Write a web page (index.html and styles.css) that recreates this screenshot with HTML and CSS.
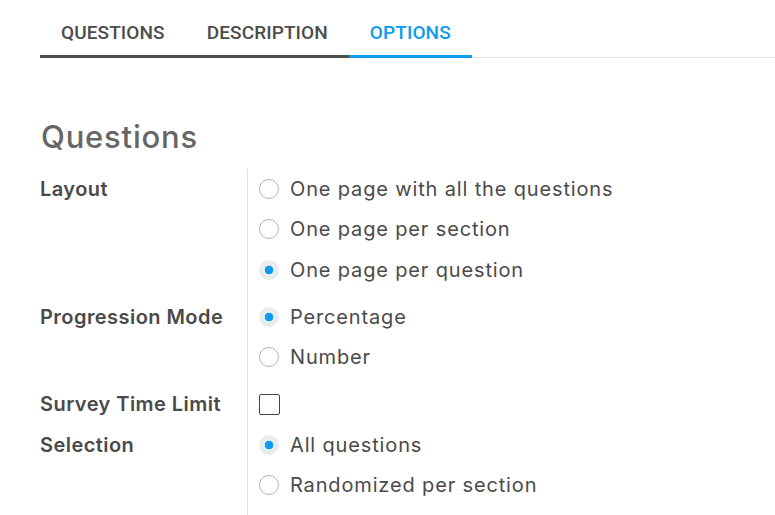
FILE: index.html
```html
<!DOCTYPE html>
<html>
<head>
<meta charset="utf-8">
<link rel="stylesheet" href="styles.css">
</head>
<body>
<nav class="tabs">
  <div class="tab tab-dark">QUESTIONS</div>
  <div class="tab tab-dark">DESCRIPTION</div>
  <div class="tab tab-active">OPTIONS</div>
  <div class="tab-rest"></div>
</nav>
<h2 class="title">Questions</h2>
<div class="form">
  <div class="label">Layout</div>
  <div class="field group">
    <div class="opt"><span class="radio"></span>One page with all the questions</div>
    <div class="opt"><span class="radio"></span>One page per section</div>
    <div class="opt"><span class="radio checked"></span>One page per question</div>
  </div>
  <div class="label">Progression Mode</div>
  <div class="field group">
    <div class="opt"><span class="radio checked"></span>Percentage</div>
    <div class="opt"><span class="radio"></span>Number</div>
  </div>
  <div class="label">Survey Time Limit</div>
  <div class="field">
    <div class="opt"><span class="check"></span></div>
  </div>
  <div class="label">Selection</div>
  <div class="field last">
    <div class="opt"><span class="radio checked"></span>All questions</div>
    <div class="opt"><span class="radio"></span>Randomized per section</div>
  </div>
</div>
</body>
</html>
```
FILE: styles.css
```css
html, body {
  margin: 0;
  padding: 0;
  background: #fff;
}
body {
  font-family: Inter, "Noto Sans", sans-serif;
  color: #4a4a4a;
  width: 775px;
  height: 515px;
  overflow: hidden;
}
.tabs {
  display: flex;
  padding-left: 40px;
  height: 58px;
}
.tab {
  font-family: Roboto, sans-serif;
  font-weight: 500;
  font-size: 19px;
  letter-spacing: 0.1px;
  padding: 9px 21px 0;
  display: flex;
  align-items: center;
  box-sizing: border-box;
  height: 58px;
  color: #4c4c4c;
}
.tab-dark {
  border-bottom: 3px solid #4c4c4c;
}
.tab-active {
  border-bottom: 3px solid #0d9bf2;
  color: #0d9bf2;
}
.tab-rest {
  flex: 1;
  height: 57px;
  border-bottom: 1px solid #dee2e6;
}
.title {
  margin: 59px 0 0 41px;
  font-size: 31px;
  font-weight: 500;
  letter-spacing: 0.8px;
  line-height: 40px;
  color: #666;
}
.form {
  display: grid;
  grid-template-columns: 207px 1fr;
  margin-left: 40px;
  margin-top: 12px;
}
.label {
  font-size: 20px;
  font-weight: 600;
  letter-spacing: 0.45px;
  color: #4a4a4a;
  line-height: 40px;
  height: 40px;
}
.field {
  border-left: 1px solid #dee2e6;
  padding-left: 11px;
}
.field.group {
  padding-bottom: 7px;
}
.field.last {
  padding-bottom: 20px;
}
.opt {
  display: flex;
  align-items: center;
  gap: 11px;
  height: 40.3px;
  font-size: 20px;
  letter-spacing: 0.85px;
  color: #4a4a4a;
}
.radio {
  width: 18px;
  height: 18px;
  border: 1px solid #b5b5b5;
  border-radius: 50%;
  box-sizing: content-box;
  flex: none;
  background: #fff;
}
.radio.checked {
  border-color: #e9ecef;
  background: radial-gradient(circle, #0d9bf2 0 4px, #e9ecef 4.6px);
}
.check {
  width: 19px;
  height: 19px;
  border: 1px solid #444;
  border-radius: 2px;
  flex: none;
}
```
